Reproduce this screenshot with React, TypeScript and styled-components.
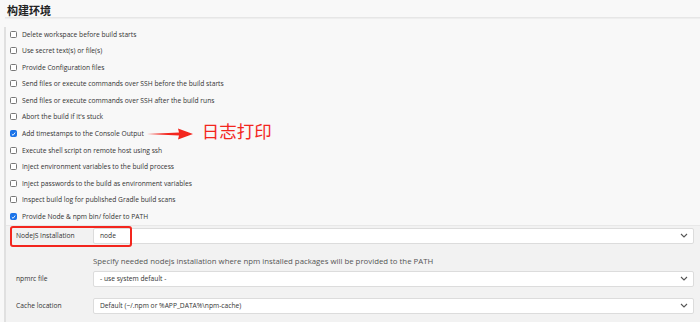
import React from "react";
import styled, { createGlobalStyle } from "styled-components";

const Global = createGlobalStyle`
  html, body { margin: 0; padding: 0; background: #f8f8f8; }
  body { font-family: "Open Sans", "Noto Sans", "Noto Sans CJK SC", sans-serif; color: #333; width: 700px; height: 322px; overflow: hidden; }
`;

const Page = styled.div`
  width: 700px;
  height: 322px;
  display: flex;
  flex-direction: column;
  background: #f8f8f8;
`;

const Header = styled.div`
  height: 17px;
  margin-left: 5px;
  border-bottom: 1px solid #e6e6e6;
  box-shadow: 0 1px 1px rgba(0, 0, 0, 0.04);
  display: flex;
  align-items: center;
  padding-left: 2px;
`;

const Title = styled.h2`
  margin: 0;
  font-family: "Noto Sans CJK SC", sans-serif;
  font-size: 11px;
  font-weight: 700;
  color: #222;
  line-height: 1;
  padding-top: 4px;
`;

const Section = styled.div`
  flex: 1;
  margin-top: 9px;
  margin-left: 4px;
  border-left: 2px solid #e0e0e0;
  display: flex;
  flex-direction: column;
`;

const CheckList = styled.div`
  display: flex;
  flex-direction: column;
  margin-top: -1.3px;
  padding-left: 4px;
`;

const Row = styled.label`
  height: 16.6px;
  display: flex;
  align-items: center;
  gap: 5px;
  font-size: 6.7px;
  color: #333;
  white-space: nowrap;
`;

const Box = styled.span<{ $checked?: boolean }>`
  width: 7px;
  height: 7px;
  box-sizing: border-box;
  border-radius: 1.5px;
  border: 1px solid ${(p) => (p.$checked ? "#1a73e8" : "#777")};
  background: ${(p) => (p.$checked ? "#1a73e8" : "#fff")};
  display: inline-flex;
  align-items: center;
  justify-content: center;
  flex: none;
`;

const Note = styled.span`
  display: inline-flex;
  align-items: center;
  margin-left: -2px;
  gap: 9px;
`;

const NoteText = styled.span`
  font-family: "Noto Sans CJK SC", sans-serif;
  font-size: 17.5px;
  color: #f3261e;
  line-height: 1;
  margin-top: -6px;
`;

const Form = styled.div`
  flex: 1;
  background: #f2f2f2;
  border-top: 1px solid #e8e8e8;
  display: flex;
  flex-direction: column;
  padding: 2px 6px 0 0;
  position: relative;
`;

const FieldRow = styled.div<{ $top?: number }>`
  display: flex;
  align-items: center;
  margin-top: ${(p) => p.$top ?? 0}px;
  height: 16px;
`;

const Label = styled.div`
  width: 87px;
  padding-left: 10px;
  box-sizing: border-box;
  font-size: 6.7px;
  color: #333;
  flex: none;
`;

const Select = styled.div`
  flex: 1;
  height: 16px;
  box-sizing: border-box;
  background: #fff;
  border: 1px solid #dcdcdc;
  border-radius: 2px;
  display: flex;
  align-items: center;
  justify-content: space-between;
  padding: 0 5px 0 6px;
  font-size: 6.7px;
  color: #333;
`;

const Help = styled.div`
  margin: 11px 0 0 87px;
  font-size: 7.8px;
  color: #555;
  height: 12px;
  line-height: 12px;
`;

const Highlight = styled.div`
  position: absolute;
  left: 4px;
  top: 0px;
  width: 122px;
  height: 21px;
  box-sizing: border-box;
  border: 2px solid #f3261e;
  border-radius: 3px;
  pointer-events: none;
`;

const Chevron = () => (
  <svg width="8" height="5" viewBox="0 0 8 5">
    <path d="M1 1 L4 4 L7 1" fill="none" stroke="#555" strokeWidth="1.1" />
  </svg>
);

const Check = () => (
  <svg width="6" height="6" viewBox="0 0 6 6">
    <path d="M1 3.2 L2.5 4.6 L5 1.3" fill="none" stroke="#fff" strokeWidth="1.1" />
  </svg>
);

const Arrow = () => (
  <svg width="46" height="12" viewBox="0 0 46 12">
    <polygon points="0,6 32,4.6 31,0.5 46,6 31,11.5 32,7.4" fill="#f3261e" />
  </svg>
);

const items: { text: string; checked?: boolean; note?: boolean }[] = [
  { text: "Delete workspace before build starts" },
  { text: "Use secret text(s) or file(s)" },
  { text: "Provide Configuration files" },
  { text: "Send files or execute commands over SSH before the build starts" },
  { text: "Send files or execute commands over SSH after the build runs" },
  { text: "Abort the build if it's stuck" },
  { text: "Add timestamps to the Console Output", checked: true, note: true },
  { text: "Execute shell script on remote host using ssh" },
  { text: "Inject environment variables to the build process" },
  { text: "Inject passwords to the build as environment variables" },
  { text: "Inspect build log for published Gradle build scans" },
  { text: "Provide Node & npm bin/ folder to PATH", checked: true },
];

export default function App() {
  return (
    <Page>
      <Global />
      <Header>
        <Title>构建环境</Title>
      </Header>
      <Section>
        <CheckList>
          {items.map((it) => (
            <Row key={it.text}>
              <Box $checked={it.checked}>{it.checked && <Check />}</Box>
              <span>{it.text}</span>
              {it.note && (
                <Note>
                  <Arrow />
                  <NoteText>日志打印</NoteText>
                </Note>
              )}
            </Row>
          ))}
        </CheckList>
        <Form>
          <FieldRow>
            <Label>NodeJS Installation</Label>
            <Select>
              <span>node</span>
              <Chevron />
            </Select>
          </FieldRow>
          <Highlight />
          <Help>Specify needed nodejs installation where npm installed packages will be provided to the PATH</Help>
          <FieldRow $top={4}>
            <Label>npmrc file</Label>
            <Select>
              <span>- use system default -</span>
              <Chevron />
            </Select>
          </FieldRow>
          <FieldRow $top={11}>
            <Label>Cache location</Label>
            <Select>
              <span>Default (~/.npm or %APP_DATA%\npm-cache)</span>
              <Chevron />
            </Select>
          </FieldRow>
        </Form>
      </Section>
    </Page>
  );
}
